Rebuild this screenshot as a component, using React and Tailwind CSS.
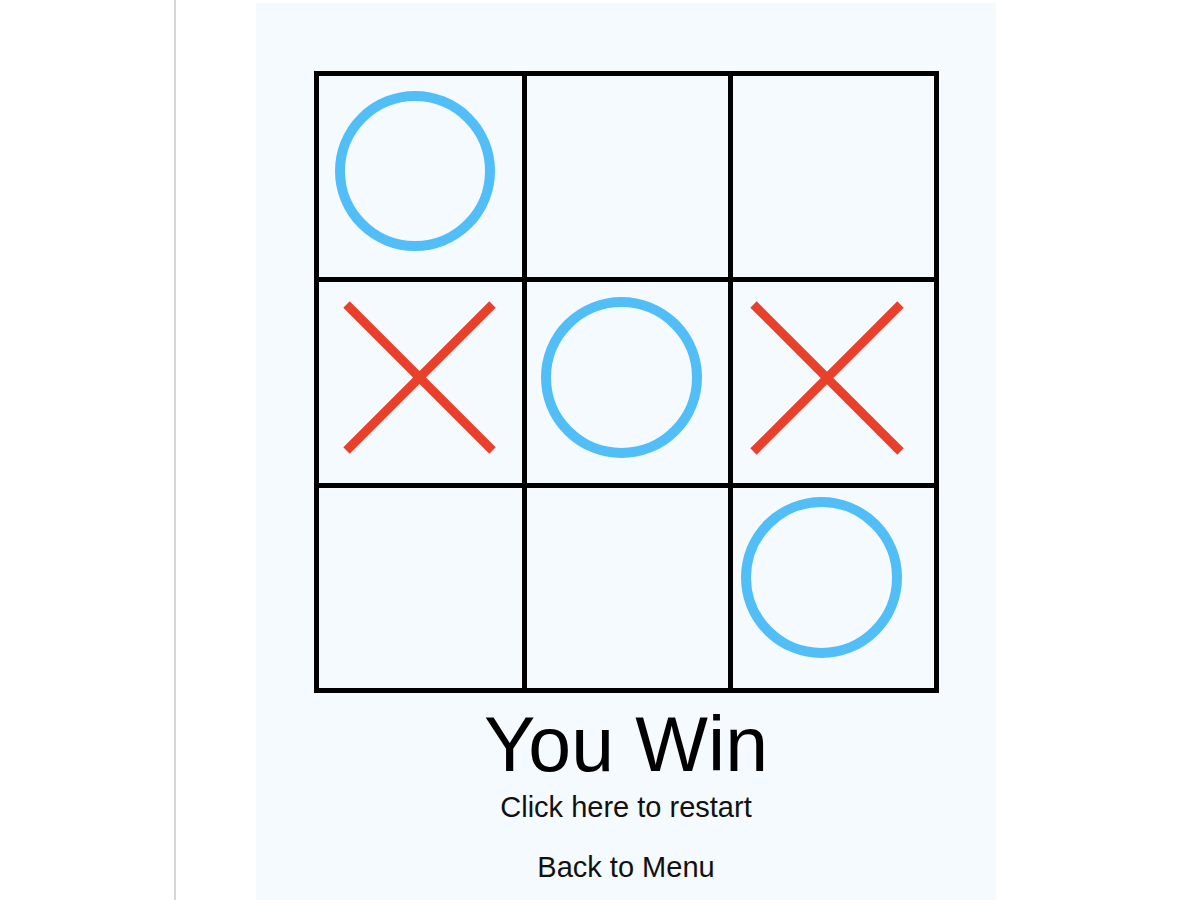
import React from 'react';

const board = [
  { mark: 'O', pad: 'pl-[16px] pt-[15px]', size: 160 },
  { mark: null },
  { mark: null },
  { mark: 'X', pad: 'pl-[24px] pt-[19px]', size: 153 },
  { mark: 'O', pad: 'pl-[14px] pt-[15px]', size: 161 },
  { mark: 'X', pad: 'pl-[17px] pt-[19px]', size: 154 },
  { mark: null },
  { mark: null },
  { mark: 'O', pad: 'pl-[8px] pt-[9px]', size: 161 },
];

const Circle = ({ size }) => (
  <svg width={size} height={size} viewBox={`0 0 ${size} ${size}`}>
    <circle cx={size / 2} cy={size / 2} r={size / 2 - 5} fill="none" stroke="#52bef7" strokeWidth="10" />
  </svg>
);

const Cross = ({ size }) => (
  <svg width={size} height={size} viewBox={`0 0 ${size} ${size}`}>
    <line x1="3.5" y1="3.5" x2={size - 3.5} y2={size - 3.5} stroke="#e8402b" strokeWidth="9" />
    <line x1={size - 3.5} y1="3.5" x2="3.5" y2={size - 3.5} stroke="#e8402b" strokeWidth="9" />
  </svg>
);

const App = () => {
  return (
    <div className="min-h-screen bg-white flex" style={{ fontFamily: '"Liberation Sans", Arial, sans-serif' }}>
      {/* sidebar edge */}
      <div className="w-[176px] shrink-0 border-r-2 border-[#d4d6da] min-h-screen" />

      <div className="pl-[80px]">
        <div className="mt-[3px] w-[740px] min-h-[897px] bg-[#f5faff] pt-[68px] flex flex-col items-center">
          {/* board */}
          <div className="grid grid-cols-[203px_201px_201px] grid-rows-[201px_201px_200px] gap-[5px] p-[5px] bg-black">
            {board.map((cell, i) => (
              <div key={i} className={`bg-[#f5faff] flex items-start ${cell.pad || ''}`}>
                {cell.mark === 'O' && <Circle size={cell.size} />}
                {cell.mark === 'X' && <Cross size={cell.size} />}
              </div>
            ))}
          </div>

          <h1 className="mt-[11px] text-[77px] leading-[80px] text-black">You Win</h1>
          <button className="mt-[7px] text-[29px] leading-[32px] text-[#111]">Click here to restart</button>
          <button className="mt-[28px] text-[29px] leading-[32px] text-[#111]">Back to Menu</button>
        </div>
      </div>
    </div>
  );
};

export default App;
